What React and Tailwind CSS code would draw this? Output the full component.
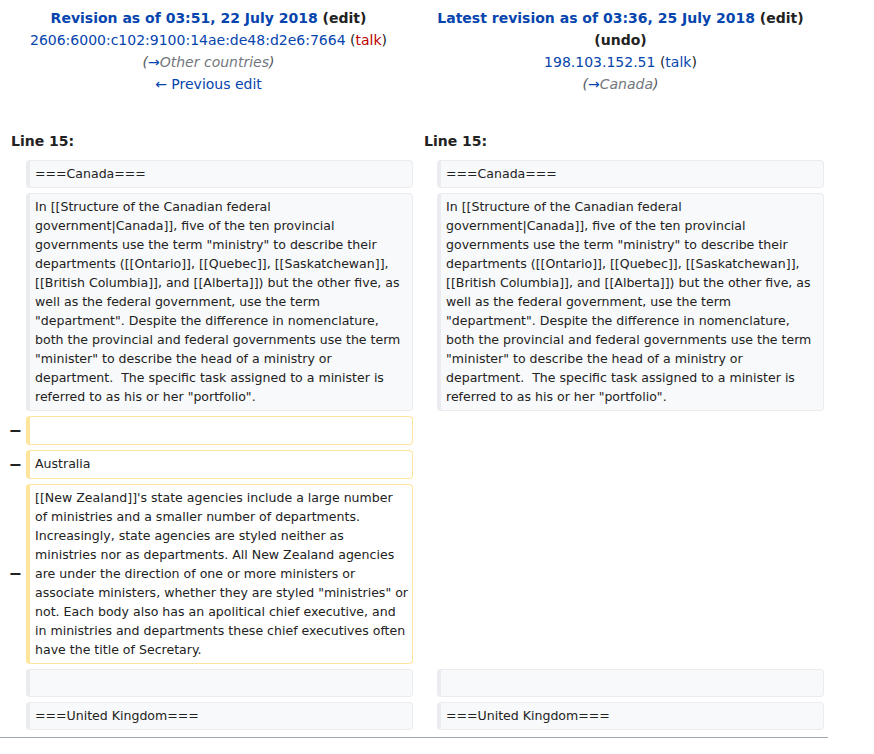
const LINK = 'text-[#0645ad]'

// wrapped the way the reference page wraps them
const canadaPara = [
  'In [[Structure of the Canadian federal',
  'government|Canada]], five of the ten provincial',
  'governments use the term "ministry" to describe their',
  'departments ([[Ontario]], [[Quebec]], [[Saskatchewan]],',
  '[[British Columbia]], and [[Alberta]]) but the other five, as',
  'well as the federal government, use the term',
  '"department". Despite the difference in nomenclature,',
  'both the provincial and federal governments use the term',
  '"minister" to describe the head of a ministry or',
  'department.  The specific task assigned to a minister is',
  'referred to as his or her "portfolio".',
].join('\n')

const nzPara = [
  "[[New Zealand]]'s state agencies include a large number",
  'of ministries and a smaller number of departments.',
  'Increasingly, state agencies are styled neither as',
  'ministries nor as departments. All New Zealand agencies',
  'are under the direction of one or more ministers or',
  'associate ministers, whether they are styled "ministries" or',
  'not. Each body also has an apolitical chief executive, and',
  'in ministries and departments these chief executives often',
  'have the title of Secretary.',
].join('\n')

// diff rows: [type, text]
const rows = [
  ['context', '===Canada==='],
  ['context', canadaPara],
  ['deleted', ''],
  ['deleted', 'Australia'],
  ['deleted', nzPara],
  ['context', ''],
  ['context', '===United Kingdom==='],
]

function Box({ kind, text }) {
  const base =
    'rounded-[4px] border border-l-4 pl-[5px] pr-[6px] pt-[2.5px] pb-[4.5px] text-[12.55px] leading-[19px] text-[#222] whitespace-pre overflow-hidden'
  if (kind === 'deleted') {
    return <div className={`${base} min-h-[29px] bg-white border-[#ffe49c]`}>{text}</div>
  }
  return <div className={`${base} min-h-[28px] bg-[#f8f9fa] border-[#eaecf0]`}>{text}</div>
}

function Marker() {
  return (
    <div className="flex items-center justify-end text-[16px] font-bold text-[#222] leading-none">
      −
    </div>
  )
}

export default function App() {
  return (
    <div className="w-[874px] h-[754px] bg-white font-['DejaVu_Sans',sans-serif] text-[14px] text-[#222]">
      <div className="w-[828px]">
        {/* revision headers */}
        <div className="flex pt-[7px] px-[4px] gap-[4px] leading-[22px]">
          <div className="w-[409px] text-center">
            <div className="font-bold">
              <span className={LINK}>Revision as of 03:51, 22 July 2018</span> (edit)
            </div>
            <div>
              <span className={LINK}>2606:6000:c102:9100:14ae:de48:d2e6:7664</span> (
              <span className="text-[#ba0000]">talk</span>)
            </div>
            <div className="italic text-[#54595d]">
              (<span className={LINK}>→</span>
              <span className="text-[#72777d]">Other countries</span>)
            </div>
            <div className={LINK}>← Previous edit</div>
          </div>
          <div className="w-[407px] text-center">
            <div className="font-bold">
              <span className={LINK}>Latest revision as of 03:36, 25 July 2018</span> (edit)
            </div>
            <div className="font-bold">(undo)</div>
            <div>
              <span className={LINK}>198.103.152.51</span> (<span className={LINK}>talk</span>)
            </div>
            <div className="italic text-[#54595d]">
              (<span className={LINK}>→</span>
              <span className="text-[#72777d]">Canada</span>)
            </div>
          </div>
        </div>

        {/* line numbers */}
        <div className="flex mt-[37px] px-[4px] gap-[4px] font-bold leading-[19px]">
          <div className="w-[409px] pl-[7px]">Line 15:</div>
          <div className="w-[407px] pl-[7px]">Line 15:</div>
        </div>

        {/* diff body */}
        <div className="grid grid-cols-[18px_387px_16px_387px] gap-x-[4px] gap-y-[5px] px-[4px] mt-[9px]">
          {rows.map(([kind, text], i) =>
            kind === 'context' ? (
              [
                <div key={`a${i}`} />,
                <Box key={`b${i}`} kind="context" text={text} />,
                <div key={`c${i}`} />,
                <Box key={`d${i}`} kind="context" text={text} />,
              ]
            ) : (
              [
                <Marker key={`a${i}`} />,
                <Box key={`b${i}`} kind="deleted" text={text} />,
                <div key={`c${i}`} />,
                <div key={`d${i}`} />,
              ]
            )
          )}
        </div>

        <div className="mt-[7px] border-t border-[#a2a9b1]" />
      </div>
    </div>
  )
}
